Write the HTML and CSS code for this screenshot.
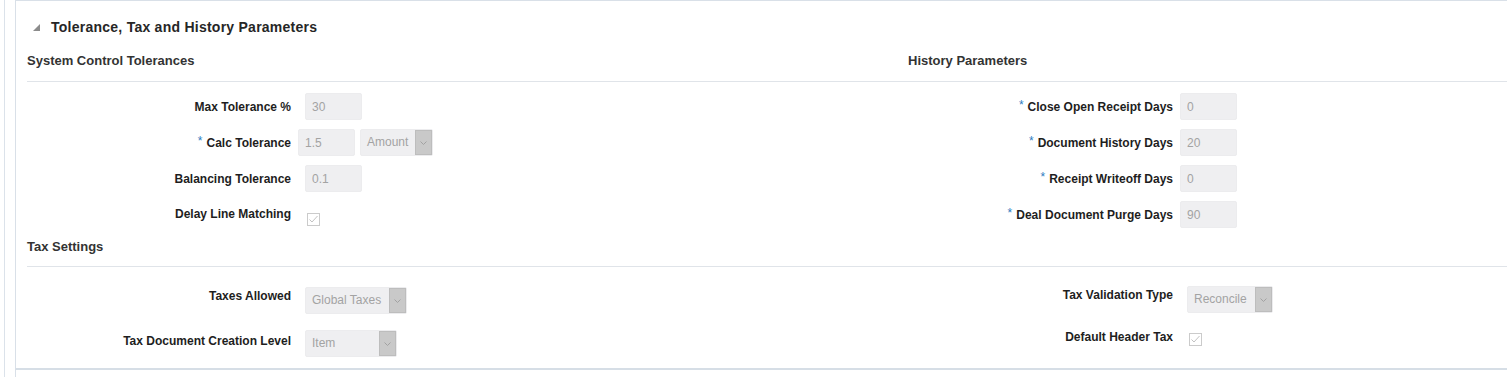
FILE: index.html
```html
<!DOCTYPE html>
<html lang="en">
<head>
  <meta charset="UTF-8" />
  <title>Tolerance, Tax and History Parameters</title>
  <link rel="stylesheet" href="styles.css">
</head>
<body>
  <div class="page">
    <div class="panel">
      <div class="panel-head">
        <svg class="disclosure" width="7" height="7" viewBox="0 0 7 7"><polygon points="0,7 7,7 7,0" fill="#8c8c8c" /></svg>
        <h2 class="panel-title">Tolerance, Tax and History Parameters</h2>
      </div>

      <div class="panel-body">
        <div class="cols">
          <div class="col">
            <h3 class="sub-head first">System Control Tolerances</h3>
            <div class="form">
              <div class="row">
                <label class="label">Max Tolerance %</label>
                <input class="field" value="30" readonly />
              </div>
              <div class="row tight">
                <label class="label"><span class="req">*</span>Calc Tolerance</label>
                <input class="field" value="1.5" readonly />
                <div class="combo amount">
                  <span class="combo-text">Amount</span>
                  <span class="combo-btn"><svg width="7" height="4" viewBox="0 0 7 4"><polyline points="0.5,0.5 3.5,3.5 6.5,0.5" fill="none" stroke="#a2a2a2" stroke-width="1" /></svg></span>
                </div>
              </div>
              <div class="row">
                <label class="label">Balancing Tolerance</label>
                <input class="field" value="0.1" readonly />
              </div>
              <div class="row check-row">
                <label class="label">Delay Line Matching</label>
                <span class="check"><svg width="11" height="11" viewBox="0 0 11 11"><polyline points="1.5,5.5 4,8 9.5,2" fill="none" stroke="#c2c2c2" stroke-width="1" /></svg></span>
              </div>
            </div>
          </div>

          <div class="col">
            <h3 class="sub-head first">History Parameters</h3>
            <div class="form">
              <div class="row tight">
                <label class="label"><span class="req">*</span>Close Open Receipt Days</label>
                <input class="field" value="0" readonly />
              </div>
              <div class="row tight">
                <label class="label"><span class="req">*</span>Document History Days</label>
                <input class="field" value="20" readonly />
              </div>
              <div class="row tight">
                <label class="label"><span class="req">*</span>Receipt Writeoff Days</label>
                <input class="field" value="0" readonly />
              </div>
              <div class="row tight">
                <label class="label"><span class="req">*</span>Deal Document Purge Days</label>
                <input class="field" value="90" readonly />
              </div>
            </div>
          </div>
        </div>

        <h3 class="sub-head tax-head">Tax Settings</h3>
        <div class="cols tax">
          <div class="col">
            <div class="form tax-form">
              <div class="row top">
                <label class="label">Taxes Allowed</label>
                <div class="combo global">
                  <span class="combo-text">Global Taxes</span>
                  <span class="combo-btn"><svg width="7" height="4" viewBox="0 0 7 4"><polyline points="0.5,0.5 3.5,3.5 6.5,0.5" fill="none" stroke="#a2a2a2" stroke-width="1" /></svg></span>
                </div>
              </div>
              <div class="row top low">
                <label class="label">Tax Document Creation Level</label>
                <div class="combo item">
                  <span class="combo-text">Item</span>
                  <span class="combo-btn"><svg width="7" height="4" viewBox="0 0 7 4"><polyline points="0.5,0.5 3.5,3.5 6.5,0.5" fill="none" stroke="#a2a2a2" stroke-width="1" /></svg></span>
                </div>
              </div>
            </div>
          </div>

          <div class="col">
            <div class="form tax-form right">
              <div class="row top">
                <label class="label">Tax Validation Type</label>
                <div class="combo reconcile">
                  <span class="combo-text">Reconcile</span>
                  <span class="combo-btn"><svg width="7" height="4" viewBox="0 0 7 4"><polyline points="0.5,0.5 3.5,3.5 6.5,0.5" fill="none" stroke="#a2a2a2" stroke-width="1" /></svg></span>
                </div>
              </div>
              <div class="row top low">
                <label class="label">Default Header Tax</label>
                <span class="check low-check"><svg width="11" height="11" viewBox="0 0 11 11"><polyline points="1.5,5.5 4,8 9.5,2" fill="none" stroke="#c2c2c2" stroke-width="1" /></svg></span>
              </div>
            </div>
          </div>
        </div>
      </div>
    </div>
    <div class="next-panel"></div>
  </div>
</body>
</html>
```

FILE: styles.css
```css
html, body {
  margin: 0;
  padding: 0;
  background: #fff;
  font-family: 'Liberation Sans', Arial, sans-serif;
  color: #222;
  overflow: hidden;
}

.page {
  margin-left: 4px;
  padding-left: 10px;
  border-left: 1px solid #dbe2ea;
  height: 377px;
  box-sizing: border-box;
  display: flex;
  flex-direction: column;
}

.panel {
  border-top: 1px solid #d9e0e8;
  border-left: 1px solid #d9e0e8;
  border-bottom: 2px solid #d6dee6;
}

.next-panel {
  flex: 1;
  border-left: 1px solid #d9e0e8;
}

.panel-head {
  display: flex;
  align-items: center;
  gap: 11px;
  padding: 16px 0 0 17px;
}

.disclosure {
  display: block;
}

.panel-title {
  margin: 0;
  font-size: 14px;
  line-height: 20px;
  font-weight: bold;
  color: #262626;
  letter-spacing: 0.25px;
}

.panel-body {
  padding: 0 0 11px 11px;
}

.cols {
  display: grid;
  grid-template-columns: 881px 1fr;
  align-items: start;
}

.sub-head {
  margin: 0;
  font-size: 13px;
  line-height: 16px;
  font-weight: bold;
  color: #333;
  border-bottom: 1px solid #e0e4e9;
}

.sub-head.first {
  margin-top: 16px;
  padding-bottom: 12px;
}

.sub-head.tax-head {
  margin-top: 11px;
  padding-bottom: 11px;
}

.form {
  display: flex;
  flex-direction: column;
  gap: 9px;
  padding-top: 11px;
}

.row {
  display: flex;
  align-items: flex-start;
  gap: 14px;
  height: 27px;
}

.row.tight {
  gap: 7px;
}

.label {
  width: 264px;
  flex-shrink: 0;
  text-align: right;
  font-size: 12px;
  font-weight: bold;
  line-height: 29px;
  color: #1e1e1e;
}

.col + .col .label {
  width: 265px;
}

.req {
  color: #2e7bbf;
  margin-right: 4px;
  vertical-align: 2px;
  line-height: 0;
  font-weight: normal;
}

.field {
  width: 57px;
  height: 27px;
  box-sizing: border-box;
  margin: 0;
  padding: 0 0 0 6px;
  border: 1px solid #ececee;
  border-radius: 2px;
  background: #efeff1;
  font-family: inherit;
  font-size: 12px;
  color: #a3a3a3;
  outline: none;
}

.row.tight .combo {
  margin-left: -2px;
}

.combo {
  display: flex;
  height: 27px;
  box-sizing: border-box;
  border: 1px solid #ececee;
  border-radius: 2px;
  background: #efeff1;
}

.combo-text {
  flex: 1;
  padding-left: 6px;
  font-size: 12px;
  line-height: 25px;
  color: #a3a3a3;
}

.combo-btn {
  width: 17px;
  box-sizing: border-box;
  border: 1px solid #bdbdbd;
  background: #c9c9c9;
  display: flex;
  align-items: center;
  justify-content: center;
}

.combo-btn svg {
  display: block;
}

.amount { width: 73px; }
.global { width: 102px; }
.item { width: 92px; }
.reconcile { width: 86px; }

.check {
  width: 13px;
  height: 13px;
  box-sizing: border-box;
  border: 1px solid #cbcbcb;
  background: #fff;
  display: flex;
  align-items: center;
  justify-content: center;
  margin-left: 2px;
}

.check svg {
  display: block;
}

.check-row .label {
  line-height: 14px;
  padding-top: 6px;
}

.check-row .check {
  margin-top: 12px;
}

.tax-form {
  padding-top: 20px;
  gap: 16px;
}

.tax-form.right {
  padding-top: 19px;
  gap: 13px;
}

.row.top .label {
  line-height: 14px;
  padding-top: 2px;
}

.row.top.low .label {
  padding-top: 4px;
}

.low-check {
  margin-top: 7px;
}
```
